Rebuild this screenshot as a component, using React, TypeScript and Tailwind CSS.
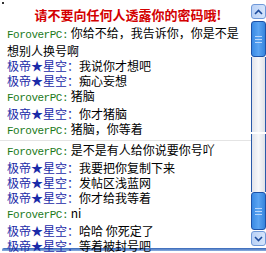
import React from "react";

type Msg = { who: "f" | "j"; text: string };

const top: Msg[] = [
  { who: "f", text: "你给不给，我告诉你，你是不是想别人换号啊" },
  { who: "j", text: "我说你才想吧" },
  { who: "j", text: "痴心妄想" },
  { who: "f", text: "猪脑" },
  { who: "j", text: "你才猪脑" },
  { who: "f", text: "猪脑，你等着" },
];

const bottom: Msg[] = [
  { who: "f", text: "是不是有人给你说要你号吖" },
  { who: "j", text: "我要把你复制下来" },
  { who: "j", text: "发帖区浅蓝网" },
  { who: "j", text: "你才给我等着" },
  { who: "f", text: "ni" },
  { who: "j", text: "哈哈 你死定了" },
  { who: "j", text: "等着被封号吧" },
];

function Row({ m }: { m: Msg }) {
  return (
    <div className="text-[12px] leading-[15px] text-black">
      {m.who === "f" ? (
        <span className="font-['Liberation_Mono',monospace] text-[11px] tracking-[-0.5px] text-[#1a7a1a]">ForoverPC:</span>
      ) : (
        <span className="text-[#1a2aa8]">极帝★星空：</span>
      )}
      {m.who === "f" ? " " : ""}
      {m.text}
    </div>
  );
}

function Grip() {
  return (
    <div className="flex flex-col gap-[2px]">
      <span className="h-px w-[7px] bg-[#b8d6fb]" />
      <span className="h-px w-[7px] bg-[#b8d6fb]" />
      <span className="h-px w-[7px] bg-[#b8d6fb]" />
    </div>
  );
}

function Thumb({ h }: { h: string }) {
  return (
    <div className={`${h} flex items-center justify-center rounded-[3px] border border-[#1d52a8] bg-gradient-to-r from-[#3a8ae4] via-[#5aa4f2] to-[#3584dc]`}>
      <Grip />
    </div>
  );
}

function ArrowBtn({ up }: { up?: boolean }) {
  return (
    <div className="flex h-[15px] items-center justify-center rounded-[3px] border border-[#6f98d8] bg-gradient-to-r from-[#b9d1f6] to-[#d6e5fb]">
      <svg width="9" height="6" viewBox="0 0 9 6">
        <path d={up ? "M1 5 L4.5 1.5 L8 5" : "M1 1 L4.5 4.5 L8 1"} fill="none" stroke="#1d4c9e" strokeWidth="1.6" />
      </svg>
    </div>
  );
}

function Track({ h }: { h: string }) {
  return <div className={`${h} border-x border-[#2a5aa8] bg-gradient-to-r from-[#e2e4ea] via-[#f7f8fa] to-[#dfe2e8]`} />;
}

export default function App() {
  return (
    <div className="relative h-[253px] w-[266px] overflow-hidden bg-white font-['Noto_Sans_CJK_SC',sans-serif]">
      <span className="absolute left-[2px] top-[2px] h-[2px] w-[2px] bg-[#333]" />
      <div className="flex h-[248px]">
        <div className="flex-1 pl-[7px] pt-[7px]">
          <div className="pr-[2px] text-center text-[13px] font-bold leading-[16px] text-[#d40000]">
            请不要向任何人透露你的密码哦!
          </div>
          <div className="mt-[2px] w-[241px]">
            {top.map((m, i) => (
              <Row key={i} m={m} />
            ))}
          </div>
          <div className="-ml-[7px] mt-[1px] border-t border-[#e4e4e4] pl-[7px] pt-[1px]">
            {bottom.map((m, i) => (
              <Row key={i} m={m} />
            ))}
          </div>
        </div>
        <div className="flex w-[15px] flex-col pt-[4px]">
          <ArrowBtn up />
          <div className="mt-[2px]">
            <Thumb h="h-[36px]" />
          </div>
          <Track h="h-[75px]" />
          <div className="h-[2px]" />
          <Track h="h-[58px]" />
          <Thumb h="h-[38px]" />
          <div className="mt-[1px]">
            <ArrowBtn />
          </div>
        </div>
      </div>
      <div className="ml-[2px] h-[3px] rounded-tl-[2px] bg-gradient-to-b from-[#3566b8] to-[#8fb0e0]" />
    </div>
  );
}
